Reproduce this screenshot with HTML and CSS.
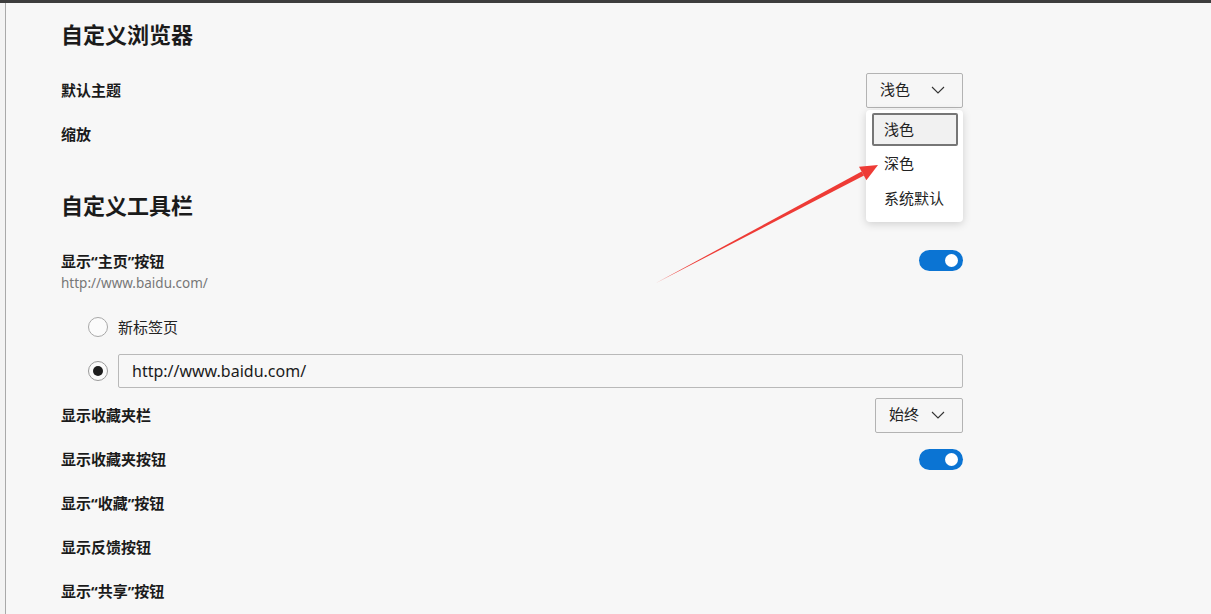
FILE: index.html
```html
<!DOCTYPE html>
<html lang="zh-CN">
<head>
  <meta charset="UTF-8">
  <title>设置 - 外观</title>
  <link rel="stylesheet" href="styles.css">
</head>
<body>
  <div class="topbar"></div>
  <div class="frame">
    <div class="gutter"></div>
    <main class="page">

      <section class="section">
        <h2 class="section-title">自定义浏览器</h2>

        <div class="row">
          <span class="label">默认主题</span>
          <div class="select-wrap">
            <div class="select select-theme">
              <span>浅色</span>
              <svg class="chevron" width="14" height="8" viewBox="0 0 14 8"><polyline points="1,1 7,7 13,1" fill="none" stroke="#333" stroke-width="1.1"/></svg>
            </div>
            <ul class="menu">
              <li class="menu-item selected">浅色</li>
              <li class="menu-item">深色</li>
              <li class="menu-item">系统默认</li>
            </ul>
          </div>
        </div>

        <div class="row">
          <span class="label">缩放</span>
        </div>
      </section>

      <section class="section">
        <h2 class="section-title second">自定义工具栏</h2>

        <div class="row row-tall">
          <div class="text-block">
            <span class="label">显示“主页”按钮</span>
            <span class="sub">http://www.baidu.com/</span>
          </div>
          <span class="toggle on"><span class="knob"></span></span>
        </div>

        <div class="row radio-row">
          <span class="radio"></span>
          <span class="radio-text">新标签页</span>
        </div>

        <div class="row radio-row">
          <span class="radio checked"><span class="dot"></span></span>
          <div class="url-input">http://www.baidu.com/</div>
        </div>

        <div class="row">
          <span class="label">显示收藏夹栏</span>
          <div class="select select-always">
            <span>始终</span>
            <svg class="chevron" width="14" height="8" viewBox="0 0 14 8"><polyline points="1,1 7,7 13,1" fill="none" stroke="#333" stroke-width="1.1"/></svg>
          </div>
        </div>

        <div class="row">
          <span class="label">显示收藏夹按钮</span>
          <span class="toggle on"><span class="knob"></span></span>
        </div>

        <div class="row">
          <span class="label">显示“收藏”按钮</span>
        </div>

        <div class="row">
          <span class="label">显示反馈按钮</span>
        </div>

        <div class="row">
          <span class="label">显示“共享”按钮</span>
        </div>
      </section>

    </main>
  </div>

  <!-- annotation arrow -->
  <svg class="annotation" width="1211" height="614" viewBox="0 0 1211 614">
    <polygon points="656,283 864,175.6 861.6,171.4" fill="#ee3b36"/>
    <polygon points="878,165 859,166.8 866.4,180.2" fill="#ee3b36"/>
  </svg>
</body>
</html>
```

FILE: styles.css
```css
html, body {
  margin: 0;
  height: 100%;
  overflow: hidden;
}
body {
  background-color: #f7f7f7;
  font-family: "Noto Sans", "Noto Sans CJK SC", sans-serif;
  color: #1b1b1b;
}
.topbar {
  height: 3px;
  background: #3d3d3d;
}
.frame {
  display: flex;
  height: calc(100% - 3px);
}
.gutter {
  width: 5px;
  background: #f3f3f3;
}
.page {
  flex: 1;
  border-left: 1px solid #a9a9a9;
  padding: 18px 0 0 55px;
}
.section {
  width: 902px;
}
.section-title {
  margin: 0 0 17px 0;
  height: 30px;
  line-height: 26px;
  font-size: 22px;
  font-weight: 700;
  color: #1b1b1b;
}
.section-title.second {
  margin-top: 36px;
}
.row {
  height: 44px;
  display: flex;
  align-items: center;
  justify-content: space-between;
}
.row-tall {
  height: 66px;
  align-items: flex-start;
  padding-top: 11px;
  box-sizing: border-box;
}
.label {
  font-size: 15px;
  font-weight: 700;
  line-height: 22px;
  color: #1b1b1b;
}
.text-block {
  display: flex;
  flex-direction: column;
}
.sub {
  font-size: 13.5px;
  line-height: 22px;
  color: #777;
}

/* toggles */
.toggle {
  width: 44px;
  height: 21px;
  border-radius: 11px;
  background: #0b74d3;
  position: relative;
  display: inline-block;
}
.toggle .knob {
  position: absolute;
  right: 5px;
  top: 4px;
  width: 13px;
  height: 13px;
  border-radius: 50%;
  background: #fff;
}

/* radios */
.radio-row {
  justify-content: flex-start;
  padding-left: 27px;
}
.radio {
  width: 18px;
  height: 18px;
  border: 1px solid #a8a8a8;
  border-radius: 50%;
  background: #fbfbfb;
  display: flex;
  align-items: center;
  justify-content: center;
  flex-shrink: 0;
}
.radio.checked {
  border-color: #9a9a9a;
}
.radio .dot {
  width: 10px;
  height: 10px;
  border-radius: 50%;
  background: #1e1e1e;
}
.radio-text {
  margin-left: 10px;
  font-size: 15px;
  line-height: 22px;
  color: #222;
}
.url-input {
  margin-left: 10px;
  flex: 1;
  height: 34px;
  box-sizing: border-box;
  border: 1px solid #b9b9b9;
  border-radius: 2px;
  background: #f7f7f7;
  padding-left: 13px;
  font-size: 16px;
  line-height: 32px;
  color: #1b1b1b;
}

/* selects */
.select-wrap {
  position: relative;
}
.select {
  height: 35px;
  box-sizing: border-box;
  border: 1px solid #b3b3b3;
  border-radius: 2px;
  background: #f6f6f6;
  display: flex;
  align-items: center;
  justify-content: space-between;
  padding: 0 17px 0 13px;
  font-size: 15px;
  line-height: 20px;
  color: #222;
}
.select span {
  position: relative;
  top: -1px;
}
.select-theme {
  width: 97px;
}
.select-always {
  width: 88px;
}
.chevron {
  display: block;
}

/* dropdown menu */
.menu {
  position: absolute;
  top: 37px;
  left: 0;
  width: 97px;
  margin: 0;
  padding: 3px 0 5px 0;
  list-style: none;
  background: #fff;
  border-radius: 4px;
  box-shadow: 0 2px 8px rgba(0,0,0,0.16);
  box-sizing: border-box;
  z-index: 2;
}
.menu-item {
  height: 35px;
  line-height: 33px;
  margin: 0 5px 0 6px;
  padding-left: 12px;
  font-size: 15px;
  color: #222;
  box-sizing: border-box;
}
.menu-item.selected {
  border: 2px solid #767676;
  border-radius: 2px;
  background: #f1f1f1;
  line-height: 28px;
  padding-left: 10px;
  height: 33px;
  margin-bottom: 1px;
}

.annotation {
  position: absolute;
  left: 0;
  top: 0;
  pointer-events: none;
  z-index: 3;
}
```
